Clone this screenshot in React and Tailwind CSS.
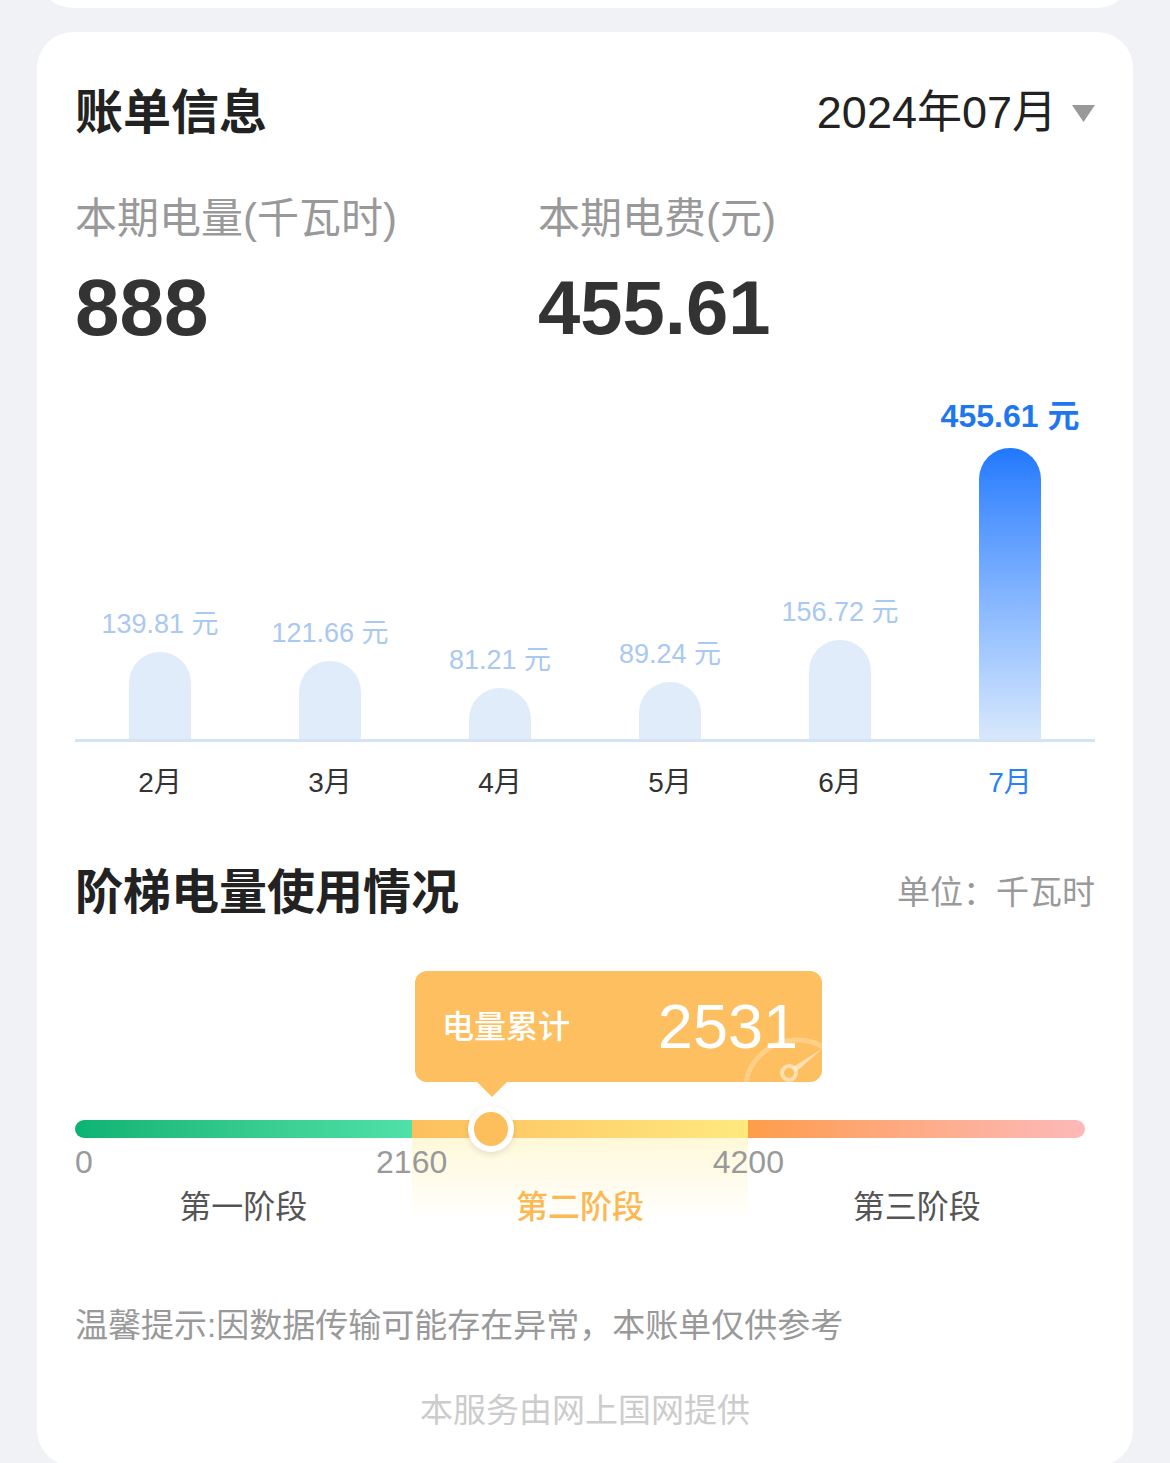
import React from 'react';

const bars = [
  { m: '2月', v: '139.81 元', h: 87 },
  { m: '3月', v: '121.66 元', h: 78 },
  { m: '4月', v: '81.21 元', h: 51 },
  { m: '5月', v: '89.24 元', h: 57 },
  { m: '6月', v: '156.72 元', h: 99 },
  { m: '7月', v: '455.61 元', h: 291, active: true },
];

function Gauge() {
  return (
    <svg className="absolute inset-0" width="407" height="111" viewBox="0 0 407 111">
      <circle cx="382" cy="121" r="52" fill="none" stroke="#ffffff" strokeOpacity="0.25" strokeWidth="5" />
      <circle cx="374" cy="102" r="7" fill="none" stroke="#ffffff" strokeOpacity="0.5" strokeWidth="4" />
      <path d="M378 96 L408 77 L381 101 Z" fill="#ffffff" fillOpacity="0.5" />
    </svg>
  );
}

export default function App() {
  return (
    <div className="h-[1463px] overflow-hidden bg-[#f1f2f6] font-['Liberation_Sans','Noto_Sans_CJK_SC',sans-serif]">
      {/* previous card */}
      <div className="mx-[37px] -mt-[28px] h-[36px] rounded-b-[36px] bg-white" />

      <div className="mx-[37px] mt-[24px] rounded-[36px] bg-white px-[38px] pt-[57px] pb-[39px]">
        {/* header */}
        <div className="flex h-[48px] items-center justify-between">
          <h2 className="text-[48px] leading-[48px] font-bold text-[#222]">账单信息</h2>
          <div className="flex items-center gap-[15px]">
            <span className="text-[45px] leading-[48px] text-[#222]">2024年07月</span>
            <svg width="23" height="17" viewBox="0 0 23 17">
              <path d="M0 0 H23 L11.5 17 Z" fill="#999" />
            </svg>
          </div>
        </div>

        {/* totals */}
        <div className="mt-[61px] flex">
          <div className="w-[463px]">
            <div className="text-[42px] leading-[42px] text-[#999]">本期电量(千瓦时)</div>
            <div className="mt-[28px] text-[80px] leading-[80px] font-bold text-[#333]">888</div>
          </div>
          <div>
            <div className="text-[42px] leading-[42px] text-[#999]">本期电费(元)</div>
            <div className="mt-[28px] text-[76px] leading-[80px] font-bold text-[#333]">455.61</div>
          </div>
        </div>

        {/* chart */}
        <div className="grid h-[391px] grid-cols-6">
          {bars.map((b) => (
            <div key={b.m} className="flex flex-col items-center justify-end">
              {b.active ? (
                <div className="mb-[16px] text-[32px] leading-[32px] font-semibold text-[#1f77f0]">{b.v}</div>
              ) : (
                <div className="mb-[14px] text-[27px] leading-[27px] text-[#a9c8f2]">{b.v}</div>
              )}
              <div
                className={
                  b.active
                    ? 'w-[62px] rounded-t-full bg-linear-to-b from-[#1f78ff] to-[#d8e8fb]'
                    : 'w-[62px] rounded-t-full bg-[#e1ecfb]'
                }
                style={{ height: b.h }}
              />
            </div>
          ))}
        </div>
        <div className="h-[3px] bg-[#d5e3f7]" />
        <div className="mt-[27px] grid grid-cols-6">
          {bars.map((b) => (
            <div
              key={b.m}
              className={'text-center text-[28px] leading-[28px] ' + (b.active ? 'text-[#2a80f5]' : 'text-[#333]')}
            >
              {b.m}
            </div>
          ))}
        </div>

        {/* tier usage */}
        <div className="mt-[72px] flex h-[48px] items-center justify-between">
          <h2 className="text-[48px] leading-[48px] font-bold text-[#222]">阶梯电量使用情况</h2>
          <span className="text-[33px] leading-[48px] text-[#999]">单位：千瓦时</span>
        </div>

        <div className="relative mt-[54px] ml-[340px] w-[407px]">
          <div className="relative flex h-[111px] items-center justify-between overflow-hidden rounded-[12px] bg-[#fdbf5f] pl-[27px] pr-[24px]">
            <Gauge />
            <span className="relative text-[32px] leading-[32px] font-medium text-white">电量累计</span>
            <span className="relative text-[63px] leading-[63px] text-white">2531</span>
          </div>
          <div className="absolute left-[62px] top-full h-0 w-0 border-x-[15px] border-t-[15px] border-x-transparent border-t-[#fdbf5f]" />
        </div>

        <div className="relative mt-[38px] w-[1010px]">
          <div className="grid h-[18px] grid-cols-3">
            <div className="rounded-l-full bg-linear-to-r from-[#0ab373] to-[#4fe1a8]" />
            <div className="bg-linear-to-r from-[#fdbf5e] to-[#fee97f]" />
            <div className="rounded-r-full bg-linear-to-r from-[#fe9c47] to-[#fdb9b9]" />
          </div>
          <div className="absolute left-[393px] top-[-14px] h-[46px] w-[46px] rounded-full border-[6px] border-white bg-[#fdbe5c] shadow-[0_2px_6px_rgba(0,0,0,0.12)]" />

          <div className="grid grid-cols-3">
            <div className="flex flex-col">
              <div className="mt-[8px] h-[32px] text-[32px] leading-[32px] text-[#999]">0</div>
              <div className="mt-[13px] text-center text-[32px] leading-[32px] text-[#555]">第一阶段</div>
            </div>
            <div className="flex flex-col bg-linear-to-b from-[#fff8d8] to-white">
              <div className="mt-[8px] h-[32px]">
                <span className="inline-block -translate-x-1/2 text-[32px] leading-[32px] text-[#999]">2160</span>
              </div>
              <div className="mt-[13px] text-center text-[32px] leading-[32px] font-medium text-[#fcb853]">第二阶段</div>
            </div>
            <div className="flex flex-col">
              <div className="mt-[8px] h-[32px]">
                <span className="inline-block -translate-x-1/2 text-[32px] leading-[32px] text-[#999]">4200</span>
              </div>
              <div className="mt-[13px] text-center text-[32px] leading-[32px] text-[#555]">第三阶段</div>
            </div>
          </div>
        </div>

        <p className="mt-[86px] text-[33px] leading-[33px] text-[#999]">温馨提示:因数据传输可能存在异常，本账单仅供参考</p>
        <p className="mt-[52px] text-center text-[33px] leading-[33px] text-[#ccc]">本服务由网上国网提供</p>
      </div>
    </div>
  );
}
